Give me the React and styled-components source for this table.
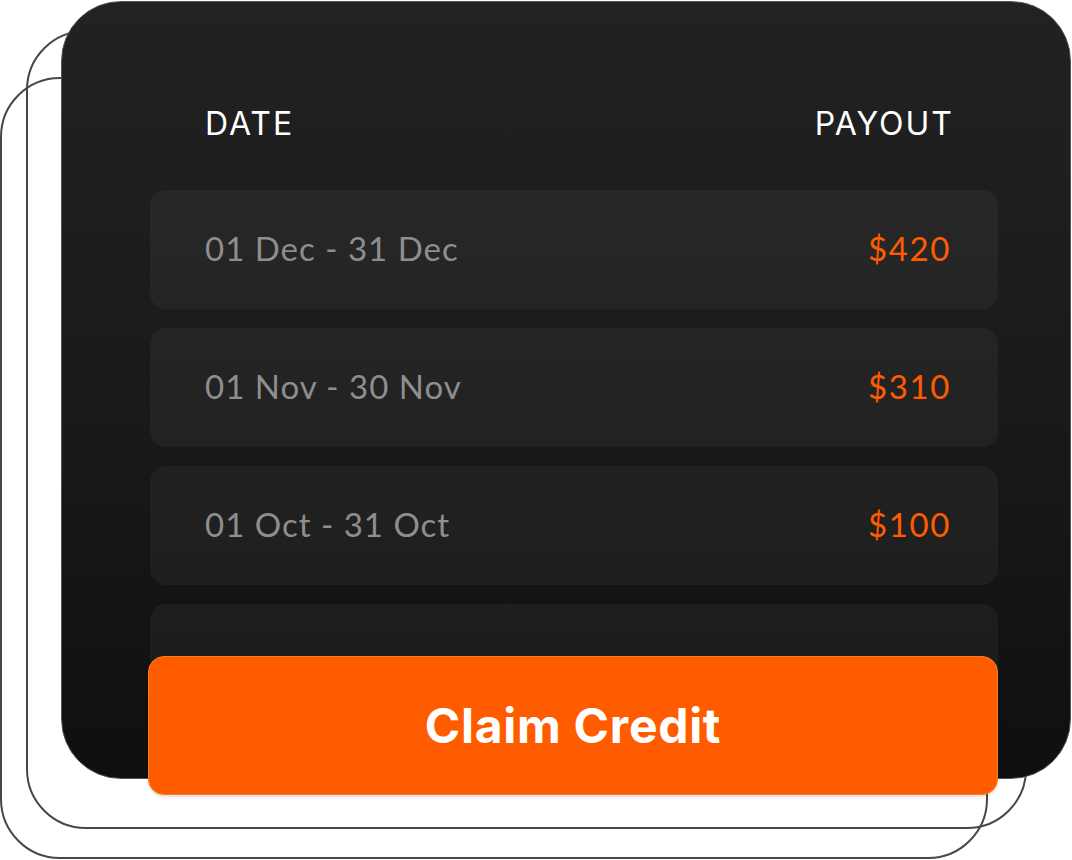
import React from "react";
import styled, { createGlobalStyle } from "styled-components";

const GlobalStyle = createGlobalStyle`
  html, body {
    margin: 0;
    padding: 0;
    background: #ffffff;
  }
  body {
    font-family: "Inter", "Liberation Sans", sans-serif;
  }
`;

const payouts = [
  { range: "01 Dec - 31 Dec", amount: "$420" },
  { range: "01 Nov - 30 Nov", amount: "$310" },
  { range: "01 Oct - 31 Oct", amount: "$100" },
  { range: "", amount: "" },
];

export default function App() {
  return (
    <>
      <GlobalStyle />
      <Stage>
        <Outline $left={0} $top={77} $width={988} $height={782} />
        <Outline $left={26} $top={30} $width={1001} $height={799} />
        <Card>
          <Header>
            <HeadLabel>DATE</HeadLabel>
            <HeadLabel>PAYOUT</HeadLabel>
          </Header>
          <Rows>
            {payouts.map((p, i) => (
              <Row key={i}>
                <Range>{p.range}</Range>
                <Amount>{p.amount}</Amount>
              </Row>
            ))}
          </Rows>
          <ClaimButton type="button">Claim Credit</ClaimButton>
        </Card>
      </Stage>
    </>
  );
}

const Stage = styled.div`
  display: grid;
  width: 1072px;
  height: 860px;
  overflow: hidden;

  & > * {
    grid-area: 1 / 1;
  }
`;

const Outline = styled.div`
  box-sizing: border-box;
  margin-left: ${(p) => p.$left}px;
  margin-top: ${(p) => p.$top}px;
  width: ${(p) => p.$width}px;
  height: ${(p) => p.$height}px;
  border: 2px solid #474747;
  border-radius: 60px;
  background: transparent;
`;

const Card = styled.div`
  position: relative;
  box-sizing: border-box;
  margin-left: 61px;
  margin-top: 1px;
  width: 1010px;
  height: 778px;
  padding: 102px 72px 0 88px;
  border: 1.5px solid #555;
  border-radius: 60px;
  background: linear-gradient(180deg, #222222 0%, #1a1a1a 50%, #0f0f0f 100%);
  display: flex;
  flex-direction: column;
`;

const Header = styled.div`
  display: flex;
  justify-content: space-between;
  padding: 0 44px 0 55px;
  margin-bottom: 46px;
`;

const HeadLabel = styled.span`
  font-family: "Inter", "Liberation Sans", sans-serif;
  font-size: 32px;
  line-height: 40px;
  color: #ffffff;
  letter-spacing: 2px;
`;

const Rows = styled.div`
  display: flex;
  flex-direction: column;
  gap: 19px;
`;

const Row = styled.div`
  display: flex;
  align-items: center;
  justify-content: space-between;
  height: 119px;
  padding: 0 47px 0 55px;
  border-radius: 16px;
  background: rgba(255, 255, 255, 0.045);
`;

const Range = styled.span`
  font-family: "Lato", "Liberation Sans", sans-serif;
  font-size: 33px;
  color: #8e8e8e;
  letter-spacing: 1px;
  margin-top: -3px;
`;

const Amount = styled.span`
  font-family: "Lato", "Liberation Sans", sans-serif;
  font-size: 33px;
  color: #ff5c00;
  letter-spacing: 1.6px;
  margin-top: -3px;
`;

const ClaimButton = styled.button`
  position: absolute;
  left: 86px;
  right: 72px;
  bottom: -17px;
  height: 139px;
  border: 1px solid #ff7a1f;
  border-radius: 16px;
  background: #ff5c00;
  box-shadow: 0 2px 3px rgba(0, 0, 0, 0.12);
  color: #ffffff;
  font-family: "Inter", "Liberation Sans", sans-serif;
  font-size: 48px;
  font-weight: 700;
  letter-spacing: 0.7px;
  cursor: pointer;
`;
